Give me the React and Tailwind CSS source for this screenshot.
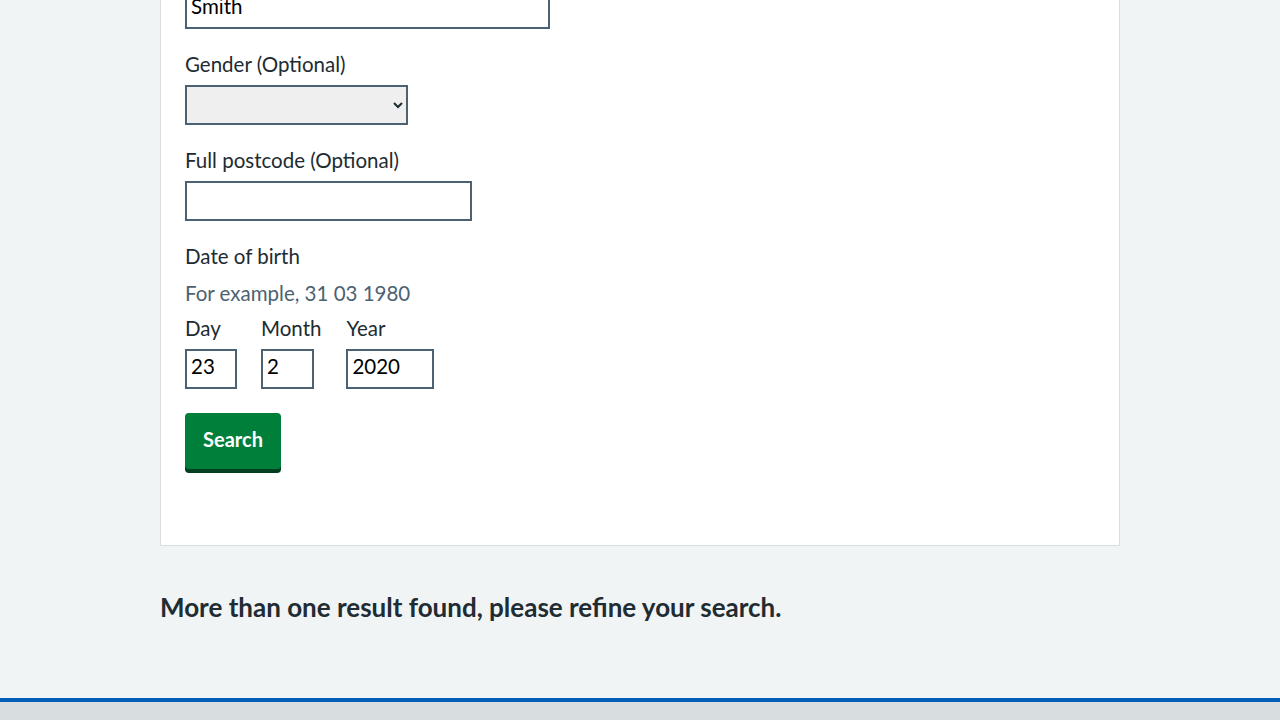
export default function App() {
  const font = { fontFamily: 'Lato, "Noto Sans", sans-serif' };
  const inputCls =
    "block h-10 border-2 border-[#4c6272] px-1 pb-[6px] text-[20.5px] text-black bg-white outline-none";
  return (
    <div className="min-h-screen bg-[#f0f4f5] text-[#212b32] overflow-hidden" style={font}>
      <div className="w-[960px] mx-auto">
        <div className="-mt-[36px] bg-white border border-[#d8dde0] pt-6 px-6 pb-[76px]">
          <div className="mb-6">
            <input defaultValue="Smith" className={inputCls + " w-[365px]"} style={font} />
          </div>
          <div className="mb-6">
            <label className="block text-[20.5px] leading-[22px] mb-[10px]">Gender (Optional)</label>
            <select
              className="block w-[223px] h-10 border-2 border-[#4c6272] bg-[#efefef] text-[19px] outline-none"
              style={font}
              defaultValue=""
            >
              <option value=""></option>
              <option value="male">Male</option>
              <option value="female">Female</option>
            </select>
          </div>
          <div className="mb-6">
            <label className="block text-[20.5px] leading-[22px] mb-[10px]">Full postcode (Optional)</label>
            <input className={inputCls + " w-[287px]"} style={font} />
          </div>
          <fieldset className="mb-6">
            <legend className="block text-[20.5px] leading-[22px]">Date of birth</legend>
            <div className="mt-[12px] text-[20.5px] leading-[28px] text-[#4c6272]">For example, 31 03 1980</div>
            <div className="mt-[10px] flex gap-6">
              <div className="flex flex-col">
                <label className="text-[20.5px] leading-[22px] mb-[10px]">Day</label>
                <input defaultValue="23" className={inputCls + " w-[52px]"} style={font} />
              </div>
              <div className="flex flex-col">
                <label className="text-[20.5px] leading-[22px] mb-[10px]">Month</label>
                <input defaultValue="2" className={inputCls + " w-[53px]"} style={font} />
              </div>
              <div className="flex flex-col">
                <label className="text-[20.5px] leading-[22px] mb-[10px] ml-px">Year</label>
                <input defaultValue="2020" className={inputCls + " w-[88px] ml-px"} style={font} />
              </div>
            </div>
          </fieldset>
          <button
            className="block w-[96px] h-[56px] pb-[5px] bg-[#007f3b] text-white font-bold text-[20px] rounded-[4px] shadow-[0_4px_0_#00401e]"
            style={font}
          >
            Search
          </button>
        </div>
        <h2 className="mt-[45px] mb-[75px] text-[26px] leading-[32px] font-bold">
          More than one result found, please refine your search.
        </h2>
      </div>
      <footer className="border-t-4 border-[#005eb8] bg-[#d8dde0] h-[100px]"></footer>
    </div>
  );
}
